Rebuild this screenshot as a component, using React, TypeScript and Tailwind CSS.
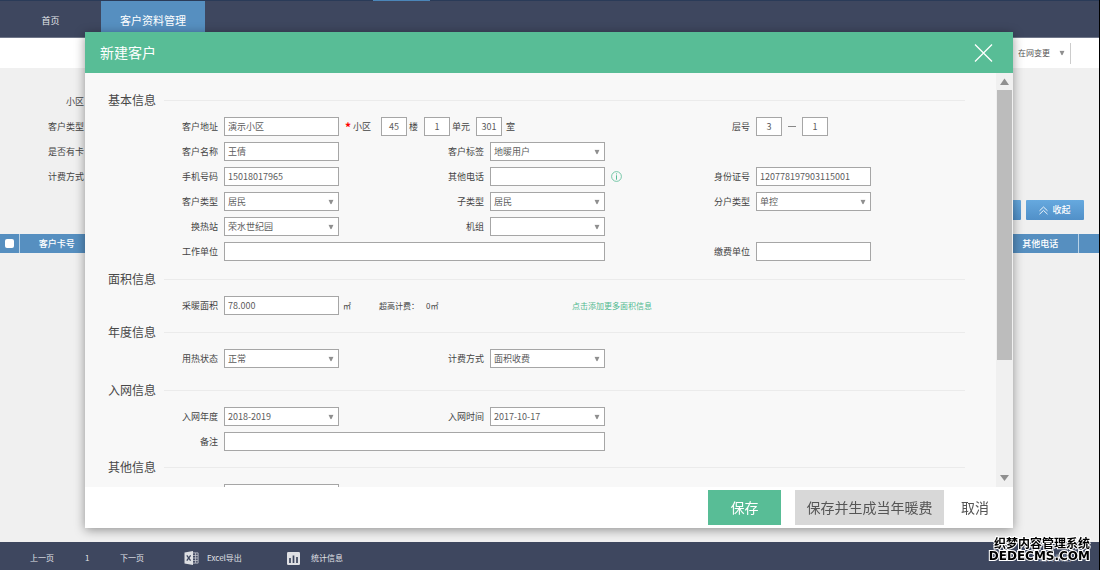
import type { ReactNode } from "react"

const inputClass =
  "h-[19px] min-w-0 rounded-none border border-[#a6a6a6] bg-white px-[3px] text-[9px] text-[#5c5c5c] outline-none"

function Caret() {
  return (
    <svg
      className="pointer-events-none absolute right-[5px] top-1/2 h-[5px] w-[6px] -translate-y-1/2"
      viewBox="0 0 6 5"
      aria-hidden="true"
    >
      <path d="M0.5 0.3h5L3.4 4.8H2.6z" fill="#8f8f8f" />
    </svg>
  )
}

function Field({
  id,
  label,
  children,
  suffix,
  className = "",
}: {
  id: string
  label: string
  children: ReactNode
  suffix?: ReactNode
  className?: string
}) {
  return (
    <div className={`flex h-[19px] items-center ${className}`}>
      <label htmlFor={id} className="mr-1.5 w-[133px] shrink-0 text-right">
        {label}
      </label>
      {children}
      <div className="flex w-3 shrink-0 items-center whitespace-nowrap pl-1 text-[8px]">
        {suffix}
      </div>
    </div>
  )
}

function TextField({
  id,
  label,
  value = "",
  suffix,
  className,
}: {
  id: string
  label: string
  value?: string
  suffix?: ReactNode
  className?: string
}) {
  return (
    <Field id={id} label={label} suffix={suffix} className={className}>
      <input
        id={id}
        type="text"
        defaultValue={value}
        className={`${inputClass} w-full flex-1`}
      />
    </Field>
  )
}

function SelectField({
  id,
  label,
  value = "",
  className,
}: {
  id: string
  label: string
  value?: string
  className?: string
}) {
  return (
    <Field id={id} label={label} className={className}>
      <div className="relative flex min-w-0 flex-1">
        <select
          id={id}
          defaultValue={value}
          className={`${inputClass} w-full appearance-none`}
        >
          <option value={value}>{value}</option>
        </select>
        <Caret />
      </div>
    </Field>
  )
}

function SmallBox({
  id,
  label,
  value,
}: {
  id: string
  label: string
  value: string
}) {
  return (
    <input
      id={id}
      aria-label={label}
      type="text"
      defaultValue={value}
      className={`${inputClass} w-[26px] shrink-0 text-center`}
    />
  )
}

function Section({
  title,
  className = "",
  children,
}: {
  title: string
  className?: string
  children: ReactNode
}) {
  return (
    <section className={className}>
      <div className="mb-[7px] flex h-5 items-center gap-2 pl-[23px] pr-[31px]">
        <h3 className="shrink-0 text-[12px] leading-5 text-[#484848]">{title}</h3>
        <div className="h-px flex-1 bg-[#ebebeb]" />
      </div>
      <div className="mr-[113px] grid grid-cols-3 gap-y-1.5">{children}</div>
    </section>
  )
}

function InfoIcon() {
  return (
    <svg
      className="ml-0.5 h-[11px] w-[11px] shrink-0"
      viewBox="0 0 11 11"
      fill="none"
      stroke="#58bd96"
      aria-hidden="true"
    >
      <circle cx="5.5" cy="5.5" r="4.9" strokeWidth="0.8" />
      <path d="M5.5 2.4v1M5.5 4.3v4.4" strokeWidth="1" />
    </svg>
  )
}

function ExcelIcon() {
  return (
    <svg className="h-[14px] w-[15px]" viewBox="0 0 15 14" aria-hidden="true">
      <path
        d="M8.5 1.9h5.6v10.2H8.5M8.5 4.4h5.4M8.5 7h5.4M8.5 9.6h5.4M11.6 2v10"
        fill="none"
        stroke="#c9ccd3"
        strokeWidth="0.8"
      />
      <path d="M0.5 1.4L9 0v14L0.5 12.6z" fill="#dddfe3" />
      <path d="M2.8 4.4l3.8 5.2M6.6 4.4L2.8 9.6" stroke="#3e475f" strokeWidth="1.3" />
    </svg>
  )
}

function ChartIcon() {
  return (
    <svg className="h-[13px] w-[13px]" viewBox="0 0 13 13" aria-hidden="true">
      <rect width="13" height="13" rx="1.2" fill="#dfe0e4" />
      <path
        d="M3 11V6M6.5 11V3.4M10 11V5"
        stroke="#3e475f"
        strokeWidth="1.7"
      />
    </svg>
  )
}

function NavBar() {
  return (
    <nav className="flex h-[38px] items-stretch border-b border-t border-b-[#6f7689] border-t-[#2a3b58] bg-[#3e475f] text-white">
      <a
        href="#home"
        className="flex w-[101px] items-center justify-center pt-1 text-[9px] text-[#e6e8ec]"
      >
        首页
      </a>
      <a
        href="#customers"
        className="flex w-[104px] items-center justify-center bg-[#568fc0] pt-0.5 text-[11px]"
      >
        客户资料管理
      </a>
      <div className="-mt-px ml-[168px] h-px w-[57px] bg-[#4b86b9]" />
    </nav>
  )
}

const filters = [
  { id: "filter-area", label: "小区" },
  { id: "filter-type", label: "客户类型" },
  { id: "filter-card", label: "是否有卡" },
  { id: "filter-fee", label: "计费方式" },
]

function CustomerList() {
  return (
    <main className="flex-1">
      <div className="flex h-[30px] items-center justify-end bg-white pr-7">
        <div className="relative border-r border-[#ccc]">
          <select
            aria-label="在网变更"
            className="block h-[21px] w-[52px] appearance-none text-[8px] text-[#555] outline-none"
          >
            <option>在网变更</option>
          </select>
          <Caret />
        </div>
      </div>

      <div className="pb-[14px] pt-[21px]">
        {filters.map((filter) => (
          <div key={filter.id} className="flex h-[25px] items-center gap-1.5">
            <label htmlFor={filter.id} className="w-[84px] text-right">
              {filter.label}
            </label>
            <input id={filter.id} type="text" className={`${inputClass} w-28`} />
          </div>
        ))}
        <div className="mt-[11px] flex justify-end gap-[5px] pr-[15px]">
          <button
            type="button"
            aria-label="查询"
            className="h-5 w-[58px] rounded-[1px] bg-linear-to-b from-[#66a9df] to-[#5190c8]"
          />
          <button
            type="button"
            className="flex h-5 w-[58px] items-center justify-center gap-1 rounded-[1px] bg-linear-to-b from-[#66a9df] to-[#5190c8] text-[9px] font-medium text-white"
          >
            <svg
              className="h-[9px] w-[9px]"
              viewBox="0 0 9 9"
              fill="none"
              stroke="#fff"
              strokeWidth="0.9"
              aria-hidden="true"
            >
              <path d="M0.5 4.8l4-3.8 4 3.8M0.5 8.2l4-3.8 4 3.8" />
            </svg>
            收起
          </button>
        </div>
      </div>

      <table className="w-full table-fixed border-collapse bg-[#568fc0] text-white">
        <thead>
          <tr className="h-[19px]">
            <th className="w-[19px] border-r border-[#b9d3e8] p-0">
              <input
                type="checkbox"
                aria-label="全选"
                className="mx-auto block h-[9px] w-[9px] appearance-none rounded-[2px] bg-white"
              />
            </th>
            <th className="w-[75px] p-0 text-[9px] font-medium">客户卡号</th>
            <th className="p-0" />
            <th className="w-[75px] border-r border-[#b9d3e8] p-0 text-[9px] font-medium">
              其他电话
            </th>
            <th className="w-[21px] p-0" />
          </tr>
        </thead>
      </table>
    </main>
  )
}

function Scrollbar() {
  return (
    <div className="flex w-[17px] shrink-0 flex-col items-center bg-[#f0f0f0]">
      <svg className="h-[17px] w-[9px] shrink-0" viewBox="0 0 9 17" aria-hidden="true">
        <path d="M4.5 5.5L9 12H0z" fill="#8f8f8f" />
      </svg>
      <div className="flex w-full flex-1 flex-col px-px">
        <div className="h-[71%] bg-[#bcbcbc]" />
      </div>
      <svg className="h-[17px] w-[9px] shrink-0" viewBox="0 0 9 17" aria-hidden="true">
        <path d="M4.5 11L0 5h9z" fill="#8f8f8f" />
      </svg>
    </div>
  )
}

function CustomerForm() {
  return (
    <form className="min-w-0 flex-1 overflow-hidden pt-[17px]">
      <Section title="基本信息" className="mb-2">
        <div className="col-span-2 flex h-[19px] items-center">
          <label htmlFor="address" className="mr-1.5 w-[133px] shrink-0 text-right">
            客户地址
          </label>
          <input
            id="address"
            type="text"
            defaultValue="演示小区"
            className={`${inputClass} w-[115px]`}
          />
          <span className="ml-1.5 w-2 text-[12px] font-bold leading-3 text-[#f00]">
            *
          </span>
          <span className="mr-2.5">小区</span>
          <SmallBox id="building" label="楼" value="45" />
          <span className="ml-0.5 mr-1.5">楼</span>
          <SmallBox id="unit" label="单元" value="1" />
          <span className="ml-0.5 mr-1.5">单元</span>
          <SmallBox id="room" label="室" value="301" />
          <span className="ml-1">室</span>
        </div>
        <div className="flex h-[19px] items-center">
          <label htmlFor="floor" className="mr-1.5 w-[133px] shrink-0 text-right">
            层号
          </label>
          <SmallBox id="floor" label="层号" value="3" />
          <span className="mx-1.5 h-px w-2 bg-[#888]" />
          <SmallBox id="floor-end" label="层号" value="1" />
        </div>

        <TextField id="name" label="客户名称" value="王倩" />
        <SelectField id="tag" label="客户标签" value="地暖用户" />

        <TextField
          id="mobile"
          label="手机号码"
          value="15018017965"
          className="col-start-1"
        />
        <TextField id="phone" label="其他电话" suffix={<InfoIcon />} />
        <TextField id="id-card" label="身份证号" value="120778197903115001" />

        <SelectField id="type" label="客户类型" value="居民" />
        <SelectField id="subtype" label="子类型" value="居民" />
        <SelectField id="household" label="分户类型" value="单控" />

        <SelectField id="station" label="换热站" value="荣水世纪园" />
        <SelectField id="group" label="机组" />

        <TextField
          id="company"
          label="工作单位"
          className="col-span-2 col-start-1"
        />
        <TextField id="payer" label="缴费单位" />
      </Section>

      <Section title="面积信息" className="mb-[7px]">
        <TextField id="area" label="采暖面积" value="78.000" suffix="㎡" />
        <div className="col-span-2 flex items-center pl-7 text-[8px]">
          <div className="flex w-[193px] gap-[7px]">
            <span>超高计费：</span>
            <span>0㎡</span>
          </div>
          <a href="#more-area" className="text-[#4fb88f]">
            点击添加更多面积信息
          </a>
        </div>
      </Section>

      <Section title="年度信息" className="mb-3">
        <SelectField id="heat-state" label="用热状态" value="正常" />
        <SelectField id="fee-mode" label="计费方式" value="面积收费" />
      </Section>

      <Section title="入网信息" className="mb-1.5">
        <SelectField id="join-year" label="入网年度" value="2018-2019" />
        <SelectField id="join-time" label="入网时间" value="2017-10-17" />
        <TextField id="remark" label="备注" className="col-span-2 col-start-1" />
      </Section>

      <Section title="其他信息">
        <TextField id="other" label="" />
      </Section>
    </form>
  )
}

function CustomerDialog() {
  return (
    <div className="fixed inset-0 flex pb-[42px] pl-[85px] pr-[87px] pt-8">
      <div
        role="dialog"
        aria-label="新建客户"
        className="flex min-w-0 flex-1 flex-col bg-white shadow-[0_2px_10px_rgba(0,0,0,0.4)]"
      >
        <header className="flex h-[41px] shrink-0 items-center justify-between bg-[#58bd96] pl-[15px] pr-5 text-white">
          <h2 className="text-[14px]">新建客户</h2>
          <button type="button" aria-label="关闭">
            <svg
              className="block h-[19px] w-[19px]"
              viewBox="0 0 19 19"
              stroke="#fff"
              strokeWidth="1.3"
              aria-hidden="true"
            >
              <path d="M1 1.5l17 17M18 1.5l-17 17" />
            </svg>
          </button>
        </header>

        <div className="flex min-h-0 flex-1 bg-[#f8f8f8]">
          <CustomerForm />
          <Scrollbar />
        </div>

        <footer className="flex h-[41px] shrink-0 items-center justify-end pr-[7px] text-[14px] text-[#555]">
          <button
            type="button"
            className="mr-[14px] h-[35px] w-[73px] bg-[#58bd96] text-white"
          >
            保存
          </button>
          <button type="button" className="h-[35px] w-[149px] bg-[#d8d8d8]">
            保存并生成当年暖费
          </button>
          <button type="button" className="h-[35px] w-[62px]">
            取消
          </button>
        </footer>
      </div>
    </div>
  )
}

function BottomBar() {
  return (
    <footer className="flex h-7 items-center bg-[#3e475f] pl-[30px] pr-7 pt-1 text-[8px] text-[#e0e2e7]">
      <button type="button" className="w-[55px] text-left">
        上一页
      </button>
      <span className="w-[35px]">1</span>
      <button type="button" className="w-16 text-left">
        下一页
      </button>
      <button type="button" className="flex w-[103px] items-center gap-2">
        <ExcelIcon />
        Excel导出
      </button>
      <button type="button" className="flex items-center gap-[11px]">
        <ChartIcon />
        统计信息
      </button>
      <span className="ml-auto text-[#8b91a0]">运行数据</span>
    </footer>
  )
}

function Watermark() {
  return (
    <div className="pointer-events-none fixed bottom-2 right-2.5 text-right font-bold text-black [-webkit-text-stroke:2px_white] [paint-order:stroke_fill]">
      <div className="text-[12px] leading-[14px]">织梦内容管理系统</div>
      <div className="font-['DejaVu_Sans',sans-serif] text-[12px] leading-3">
        DEDECMS.COM
      </div>
    </div>
  )
}

export default function App() {
  return (
    <div className="flex min-h-screen flex-col border-r border-black bg-[#f0f0f0] font-['Noto_Sans_CJK_SC',sans-serif] text-[9px] text-[#444]">
      <NavBar />
      <CustomerList />
      <BottomBar />
      <CustomerDialog />
      <Watermark />
    </div>
  )
}
